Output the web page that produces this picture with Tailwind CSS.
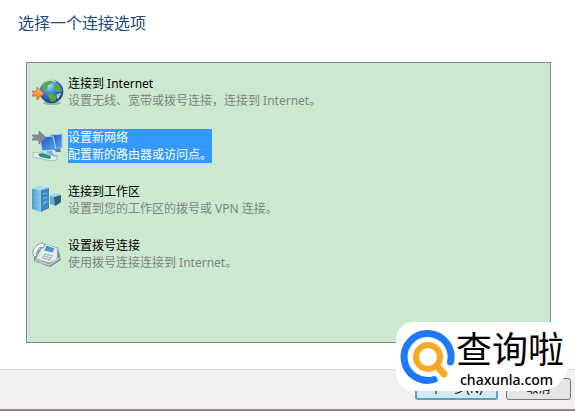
<!DOCTYPE html>
<html lang="zh-CN">
<head>
<meta charset="utf-8">
<meta name="viewport" content="width=device-width, initial-scale=1">
<title>选择一个连接选项</title>
<script src="https://cdn.jsdelivr.net/npm/@tailwindcss/browser@4"></script>
</head>
<body class="relative flex min-h-screen flex-col bg-white font-['Noto_Sans','Noto_Sans_CJK_SC',sans-serif] text-xs text-black">
<main class="flex flex-1 flex-col pt-[11px] pr-6 pb-[26px] pl-[26px]">
  <h1 class="-ml-2 mb-[27px] text-base leading-6 text-[#234a80]">选择一个连接选项</h1>
  <ul class="flex flex-1 flex-col gap-5 border border-[#7f8d86] bg-[#cce8cf] pt-3 pb-16 pl-[5px] leading-[17px]">
    <li>
      <a href="#internet" class="flex items-center gap-1">
        <svg class="h-8 w-8" viewBox="0 0 32 32" aria-hidden="true">
          <defs>
            <radialGradient id="globe" cx=".4" cy=".25" r=".8"><stop offset="0" stop-color="#a9dcf5"/><stop offset=".45" stop-color="#3580c4"/><stop offset="1" stop-color="#123878"/></radialGradient>
            <linearGradient id="orange" x2="0" y2="1"><stop stop-color="#ffc07a"/><stop offset="1" stop-color="#ed7420"/></linearGradient>
          </defs>
          <ellipse cx="20" cy="27" rx="9" ry="2" fill="#96b6a1"/>
          <circle cx="19.500" cy="15.500" r="11.800" fill="url(#globe)"/>
          <path d="M12 8c3-4 6-4 9-4l-1 3-4 2-1 4-4 2zM22 8l5 1 3 6-4 1-4-3zM15 18l5-1 5 4-2 4-4 1-2-4z" fill="#56a846"/>
          <path d="M13 6c4-3 8-2 11 0M25 19l3-1-2 4z" fill="none" stroke="#b9e6c3" stroke-width="1.200"/>
          <path d="M0 15h5v-4l7 6.500L5 24v-4H0l1.500-2.500z" fill="url(#orange)" stroke="#c46e30" stroke-width=".8"/>
        </svg>
        <span><span class="block">连接到 Internet</span><span class="block text-[#7c877e]">设置无线、宽带或拨号连接，连接到 Internet。</span></span>
      </a>
    </li>
    <li>
      <a href="#network" class="flex items-center gap-1" aria-current="true">
        <svg class="h-8 w-8" viewBox="0 0 32 32" aria-hidden="true">
          <defs><linearGradient id="screen" x2="1" y2="1"><stop stop-color="#1756c0"/><stop offset="1" stop-color="#5aa8f4"/></linearGradient></defs>
          <path d="M18 5l12-1v14l-10 1z" fill="url(#screen)" stroke="#a5c8ea"/>
          <path d="M8 7l13-1 3 14-14 1z" fill="url(#screen)" stroke="#b8d8f2"/>
          <path d="M22 19l6-1 1 4h-5z" fill="#5a83aa"/>
          <path d="M15 21h5l1 3 5 2-4 3-7-3z" fill="#86add0"/>
          <path d="M1 23l8-1 16 5v3l-6 1L1 27z" fill="#e4f1f0" stroke="#a4c2c4"/>
          <path d="M6 24l4-1 9 3-1 3-10-2z" fill="#268d80"/>
          <path d="M0 5h7V1l7 6.500L7 14v-4H0l2-2.500z" fill="#89899e" stroke="#747589" stroke-width=".8"/>
        </svg>
        <span class="bg-[#3399ff] text-white"><span class="block">设置新网络</span><span class="block">配置新的路由器或访问点。</span></span>
      </a>
    </li>
    <li>
      <a href="#workplace" class="flex items-center gap-1">
        <svg class="h-8 w-8" viewBox="0 0 32 32" aria-hidden="true">
          <defs><linearGradient id="tower" x2="1" y2="0"><stop stop-color="#4c9ccd"/><stop offset=".6" stop-color="#95d1ef"/><stop offset="1" stop-color="#3580b2"/></linearGradient></defs>
          <path d="M0 5l7-3 10 2v20l-8 4-9-3z" fill="url(#tower)"/>
          <path d="M9 6l8-2v20l-8 4z" fill="#3b8abb"/>
          <path d="M0 5l7-3 10 2-8 2z" fill="#a7ddf4"/>
          <path d="M2 9l5 1M2 13l5 1M2 17l5 1M2 21l5 1M11 10l4-1M11 15l4-2M11 20l4-3" stroke="#79bfe1" stroke-width="1.200"/>
          <path d="M18 12l5-2 6 1v7l-5 4-6-2z" fill="#62abd0"/>
          <path d="M22 13l7-2v7l-6 4z" fill="#315f82"/>
          <path d="M18 12l5-2 6 1-7 2z" fill="#a2d4e9"/>
        </svg>
        <span><span class="block">连接到工作区</span><span class="block text-[#7c877e]">设置到您的工作区的拨号或 VPN 连接。</span></span>
      </a>
    </li>
    <li>
      <a href="#dialup" class="flex items-center gap-1">
        <svg class="h-8 w-8" viewBox="0 0 32 32" aria-hidden="true">
          <path d="M2 20l9-14 15 4 3 12-11 7-16-6z" fill="#76858c"/>
          <path d="M5 18l7-12 14 4-1 12-8 3-13-4z" fill="#e4e9eb" stroke="#9da8ad"/>
          <path d="M14 7l9 3-2 5-9-2z" fill="#4999cb" stroke="#d8edf7"/>
          <path d="M12 16l9 2M11 18l9 2M10 20l9 2M14 15l-4 6M17 16l-4 6M20 17l-4 6" stroke="#98a4aa" stroke-width=".7"/>
          <path d="M1 13c2-5 5-7 9-8l3 2-2 3-3-1-4 6 1 2-2 2-2-2z" fill="#f5f7f8" stroke="#8c999f"/>
          <path d="M3 22l14 5 11-7" fill="none" stroke="#b8c7cc" stroke-width="2"/>
        </svg>
        <span><span class="block">设置拨号连接</span><span class="block text-[#7c877e]">使用拨号连接连接到 Internet。</span></span>
      </a>
    </li>
  </ul>
</main>
<footer class="flex h-[42px] items-start justify-end gap-2 border-t border-b-2 border-t-[#dcdcdc] border-b-[#998780] bg-[#f0f0f0] pt-2 pr-1">
  <button type="button" class="h-[22px] w-[83px] rounded-[3px] border-2 border-[#5aa0bd] bg-[#d2e8f3] leading-[18px]">下一步(N)</button>
  <button type="button" class="h-[22px] w-[65px] rounded-[3px] border border-[#777777] bg-[#e5e5e5] leading-5">取消</button>
</footer>
<aside class="absolute right-[7px] bottom-5 flex h-[69px] w-[172px] items-center gap-1 rounded-[18px] rounded-br-[28px] bg-white pl-1">
  <svg class="h-14 w-14 shrink-0" viewBox="0 0 56 56" aria-hidden="true">
    <path d="M50.500 33A23.500 23.500 0 1 0 34 50.500" fill="none" stroke="#1e78fa" stroke-width="7" stroke-linecap="round"/>
    <circle cx="28" cy="28" r="12" fill="none" stroke="#f9a825" stroke-width="6"/>
    <path d="M37 37l7 8" stroke="#f9a825" stroke-width="7" stroke-linecap="round"/>
  </svg>
  <div class="pt-1 whitespace-nowrap text-black">
    <p class="-ml-1 text-4xl leading-[42px]">查询啦</p>
    <p class="text-sm leading-[18px] font-medium">chaxunla.com</p>
  </div>
</aside>
</body>
</html>
